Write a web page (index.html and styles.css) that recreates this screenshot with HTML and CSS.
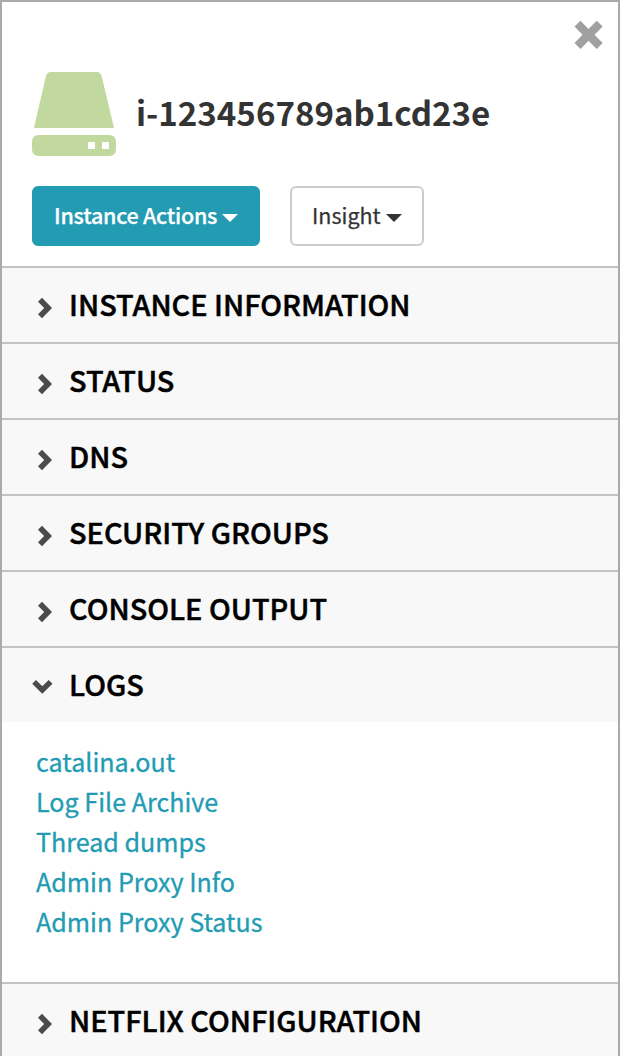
FILE: index.html
```html
<!DOCTYPE html>
<html lang="en">
<head>
<meta charset="utf-8">
<title>Instance details</title>
<link rel="stylesheet" href="styles.css">
</head>
<body>
<aside class="panel">
  <header class="header">
    <button class="close" aria-label="Close"><svg width="30" height="30" viewBox="0 0 30 30"><path d="M6.500 .7L14.500 8.900l8.200-8.200 6 5.800-8.200 8.200 8.200 8.200-6 6-8.200-8.200-8 8.200-6-6 8-8.200-8-8.200z"/></svg></button>
    <div class="identity">
      <svg class="drive" width="84" height="84" viewBox="0 0 84 84"><path d="M2 56L13.800 4.500Q15 0 19 0h46q3.500 0 4.700 4.500L82 56z"/><path fill-rule="evenodd" d="M7 63h70q7 0 7 7v7q0 7-7 7H7q-7 0-7-7v-7q0-7 7-7zm49 7v7h7v-7zm14 0v7h7v-7z"/></svg>
      <h1 class="title">i-123456789ab1cd23e</h1>
    </div>
    <div class="actions">
      <button class="btn primary"><span>Instance Actions</span><i class="caret"></i></button>
      <button class="btn"><span>Insight</span><i class="caret"></i></button>
    </div>
  </header>
  <section class="section"><h2 class="heading"><svg class="chevron" viewBox="0 0 22 22"><path d="M10 .8L6 4.800 12.200 11 6 17.200 10 21.200 20 11z"/></svg><span>INSTANCE INFORMATION</span></h2></section>
  <section class="section"><h2 class="heading"><svg class="chevron" viewBox="0 0 22 22"><path d="M10 .8L6 4.800 12.200 11 6 17.200 10 21.200 20 11z"/></svg><span>STATUS</span></h2></section>
  <section class="section"><h2 class="heading"><svg class="chevron" viewBox="0 0 22 22"><path d="M10 .8L6 4.800 12.200 11 6 17.200 10 21.200 20 11z"/></svg><span>DNS</span></h2></section>
  <section class="section"><h2 class="heading"><svg class="chevron" viewBox="0 0 22 22"><path d="M10 .8L6 4.800 12.200 11 6 17.200 10 21.200 20 11z"/></svg><span>SECURITY GROUPS</span></h2></section>
  <section class="section"><h2 class="heading"><svg class="chevron" viewBox="0 0 22 22"><path d="M10 .8L6 4.800 12.200 11 6 17.200 10 21.200 20 11z"/></svg><span>CONSOLE OUTPUT</span></h2></section>
  <section class="section">
    <h2 class="heading"><svg class="chevron" viewBox="0 0 22 22"><path d="M.2 6.800L4 3l6.300 6.200L16.700 3l3.800 3.800-10.200 10z"/></svg><span>LOGS</span></h2>
    <ul class="links">
      <li><a>catalina.out</a></li>
      <li><a>Log File Archive</a></li>
      <li><a>Thread dumps</a></li>
      <li><a>Admin Proxy Info</a></li>
      <li><a>Admin Proxy Status</a></li>
    </ul>
  </section>
  <section class="section"><h2 class="heading"><svg class="chevron" viewBox="0 0 22 22"><path d="M10 .8L6 4.800 12.200 11 6 17.200 10 21.200 20 11z"/></svg><span>NETFLIX CONFIGURATION</span></h2></section>
</aside>
</body>
</html>
```
FILE: styles.css
```css
* { box-sizing: border-box; }
body { margin: 0; background: #fff; font-family: "Noto Sans CJK SC", "Noto Sans", sans-serif; color: #333; }
.panel { height: 1056px; overflow: hidden; border: 2px solid #aaa; border-bottom: 0; }
.header { height: 264px; padding: 18px 14px 0 30px; display: flex; flex-direction: column; }
.close { align-self: flex-end; width: 30px; height: 30px; padding: 0; border: 0; background: none; fill: #a0a0a0; }
.close svg { display: block; }
.identity { display: flex; align-items: center; gap: 20px; height: 84px; margin-top: 22px; }
.drive { fill: #c1d89e; flex: none; }
.title { margin: 0; padding-bottom: 5px; font-size: 33.100px; line-height: 50px; font-weight: 600; white-space: nowrap; }
.actions { display: flex; gap: 30px; margin-top: 30px; }
.btn { display: flex; align-items: center; gap: 5px; height: 60px; padding: 0 20px; border: 2px solid #ccc; border-radius: 6px; background: #fff; color: #333; font: 400 21.500px/30px "Noto Sans CJK SC", sans-serif; white-space: nowrap; width: 134px; }
.btn span { padding-bottom: 2px; -webkit-text-stroke: .25px currentColor; }
.btn.primary { width: 228px; background: #229bb3; border-color: #229bb3; color: #fff; font-weight: 500; letter-spacing: -.25px; }
.caret { border: 8px solid transparent; border-top-color: currentColor; border-bottom: 0; margin-top: 3px; }
.section { border-top: 2px solid #c3c3c3; }
.heading { display: flex; align-items: center; gap: 15px; height: 74px; margin: 0; padding: 0 30px; background: #f8f8f8; color: #000; font-size: 28.900px; line-height: 40px; font-weight: 500; white-space: nowrap; }
.heading span { padding-bottom: 5px; -webkit-text-stroke: .5px currentColor; }
.chevron { width: 22px; height: 22px; margin-top: 5px; fill: #4b4b4b; flex: none; }
.links { height: 260px; margin: 0; padding: 19px 34px; list-style: none; font-size: 25.100px; line-height: 40px; color: #229bb3; -webkit-text-stroke: .3px currentColor; }
```
